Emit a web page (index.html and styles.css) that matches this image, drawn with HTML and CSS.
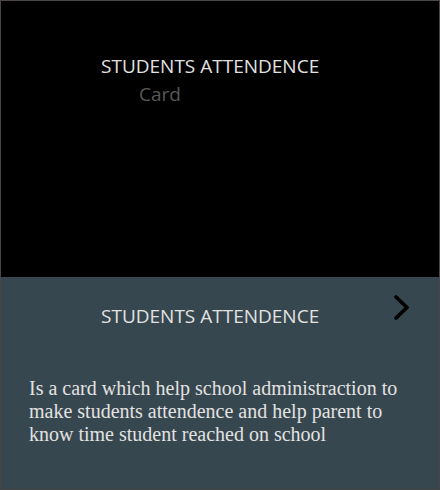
FILE: index.html
```html
<!DOCTYPE html>
<html>
<head>
<meta charset="utf-8">
<link rel="stylesheet" href="styles.css">
</head>
<body>
<div class="card">
  <div class="front">
    <div class="front-title">STUDENTS ATTENDENCE</div>
    <div class="front-sub">Card</div>
  </div>
  <div class="back">
    <div class="back-head">
      <div class="back-title">STUDENTS ATTENDENCE</div>
      <svg class="chev" width="20" height="28" viewBox="0 0 20 28"><path d="M4 3 L15 13.5 L4 24" fill="none" stroke="#000" stroke-width="3.8" stroke-linecap="round" stroke-linejoin="round"/></svg>
    </div>
    <p class="desc">Is a card which help school administraction to make students attendence and help parent to know time student reached on school</p>
  </div>
</div>
</body>
</html>
```
FILE: styles.css
```css
html, body { margin: 0; padding: 0; background: #37474f; }
.card {
  width: 440px;
  height: 490px;
  box-sizing: border-box;
  border: 1px solid #4b4547;
  display: flex;
  flex-direction: column;
}
.front {
  background: #000;
  height: 276px;
  padding-top: 52px;
  box-sizing: border-box;
  font-family: "Open Sans", sans-serif;
}
.front-title {
  color: #e2e2e2;
  font-size: 19px;
  line-height: 26px;
  padding-left: 100px;
}
.front-sub {
  color: #585858;
  font-size: 19px;
  line-height: 26px;
  padding-left: 138px;
  padding-top: 2px;
}
.back {
  flex: 1;
  background: #37474f;
}
.back-head {
  display: flex;
  align-items: flex-start;
  height: 80px;
  position: relative;
}
.back-title {
  font-family: "Open Sans", sans-serif;
  color: #e2e2e2;
  font-size: 19px;
  line-height: 26px;
  padding-left: 100px;
  padding-top: 26px;
}
.chev {
  position: absolute;
  left: 391px;
  top: 17px;
}
.desc {
  margin: 0;
  padding: 20px 28px 0 28px;
  font-family: "Liberation Serif", serif;
  font-size: 20px;
  line-height: 23px;
  color: #e2e2e2;
}
```
